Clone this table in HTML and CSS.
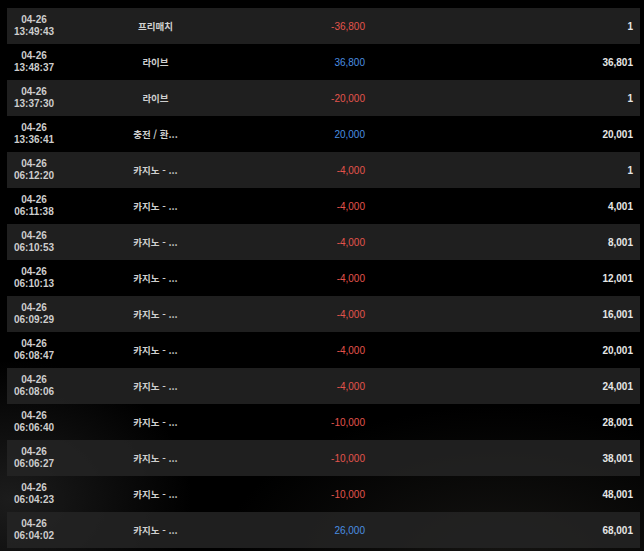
FILE: index.html
```html
<!DOCTYPE html>
<html lang="ko">
<head>
<meta charset="utf-8">
<link rel="stylesheet" href="styles.css">
</head>
<body>
<div class="list">
  <div class="row"><div class="date">04-26<br>13:49:43</div><div class="type">프리매치</div><div class="amt minus">-36,800</div><div class="bal">1</div></div>
  <div class="row"><div class="date">04-26<br>13:48:37</div><div class="type">라이브</div><div class="amt plus">36,800</div><div class="bal">36,801</div></div>
  <div class="row"><div class="date">04-26<br>13:37:30</div><div class="type">라이브</div><div class="amt minus">-20,000</div><div class="bal">1</div></div>
  <div class="row"><div class="date">04-26<br>13:36:41</div><div class="type">충전 / 환...</div><div class="amt plus">20,000</div><div class="bal">20,001</div></div>
  <div class="row"><div class="date">04-26<br>06:12:20</div><div class="type">카지노 - ...</div><div class="amt minus">-4,000</div><div class="bal">1</div></div>
  <div class="row"><div class="date">04-26<br>06:11:38</div><div class="type">카지노 - ...</div><div class="amt minus">-4,000</div><div class="bal">4,001</div></div>
  <div class="row"><div class="date">04-26<br>06:10:53</div><div class="type">카지노 - ...</div><div class="amt minus">-4,000</div><div class="bal">8,001</div></div>
  <div class="row"><div class="date">04-26<br>06:10:13</div><div class="type">카지노 - ...</div><div class="amt minus">-4,000</div><div class="bal">12,001</div></div>
  <div class="row"><div class="date">04-26<br>06:09:29</div><div class="type">카지노 - ...</div><div class="amt minus">-4,000</div><div class="bal">16,001</div></div>
  <div class="row"><div class="date">04-26<br>06:08:47</div><div class="type">카지노 - ...</div><div class="amt minus">-4,000</div><div class="bal">20,001</div></div>
  <div class="row"><div class="date">04-26<br>06:08:06</div><div class="type">카지노 - ...</div><div class="amt minus">-4,000</div><div class="bal">24,001</div></div>
  <div class="row"><div class="date">04-26<br>06:06:40</div><div class="type">카지노 - ...</div><div class="amt minus">-10,000</div><div class="bal">28,001</div></div>
  <div class="row"><div class="date">04-26<br>06:06:27</div><div class="type">카지노 - ...</div><div class="amt minus">-10,000</div><div class="bal">38,001</div></div>
  <div class="row"><div class="date">04-26<br>06:04:23</div><div class="type">카지노 - ...</div><div class="amt minus">-10,000</div><div class="bal">48,001</div></div>
  <div class="row"><div class="date">04-26<br>06:04:02</div><div class="type">카지노 - ...</div><div class="amt plus">26,000</div><div class="bal">68,001</div></div>
</div>
</body>
</html>
```
FILE: styles.css
```css
html, body {
  margin: 0;
  padding: 0;
  height: 100%;
}
body {
  background-color: #000;
  background-image:
    radial-gradient(ellipse 260px 200px at 10px 500px, rgba(70,70,70,0.4), rgba(0,0,0,0) 70%),
    radial-gradient(ellipse 400px 220px at 500px 560px, rgba(60,58,52,0.35), rgba(0,0,0,0) 70%);
  font-family: "Liberation Sans", Arial, "Noto Sans CJK KR", sans-serif;
  font-size: 10px;
  overflow: hidden;
}
.list {
  margin: 8px 4px 0 7px;
  display: flex;
  flex-direction: column;
}
.row {
  display: grid;
  grid-template-columns: 54px 189px 121px 1fr;
  align-items: center;
  height: 36px;
}
.row:nth-child(odd) {
  background: rgba(36,36,36,0.85);
}
.date {
  text-align: center;
  font-weight: bold;
  color: #cdcdcd;
  line-height: 12.5px;
}
.type {
  text-align: center;
  font-family: "Noto Sans CJK KR", "Liberation Sans", sans-serif;
  font-size: 9.5px;
  font-weight: bold;
  color: #cfcfcf;
  letter-spacing: 0;
}
.amt {
  text-align: right;
  padding-right: 6px;
}
.minus { color: #e3544c; }
.plus { color: #4a8fe0; }
.bal {
  text-align: right;
  padding-right: 7px;
  font-weight: bold;
  color: #e6e6e6;
}
```
